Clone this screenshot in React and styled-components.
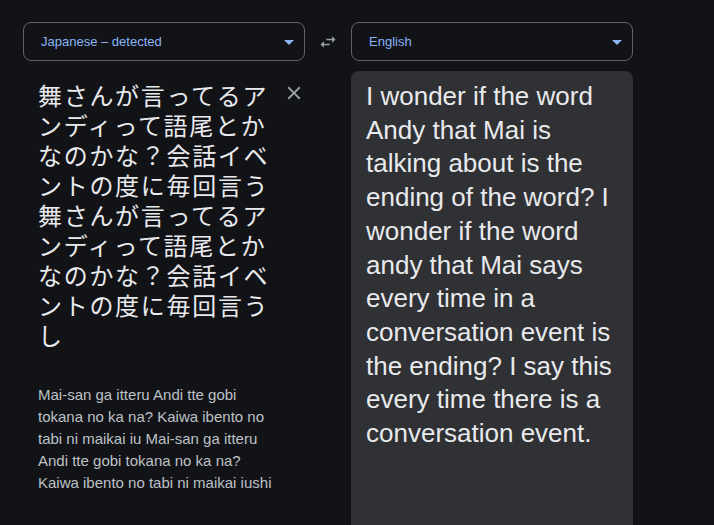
import React from 'react'
import styled, { createGlobalStyle } from 'styled-components'

const GlobalStyle = createGlobalStyle`
    html, body {
        margin: 0;
        padding: 0;
        background: #121317;
        font-family: "Liberation Sans", Arial, sans-serif;
    }
`

const Page = styled.div`
    width: 714px;
    height: 525px;
    overflow: hidden;
    box-sizing: border-box;
    padding: 22px 0 0 23px;
    background: #121317;
`

const Grid = styled.div`
    display: grid;
    grid-template-columns: 282px 46px 282px;
    grid-template-rows: 39px 1fr;
    row-gap: 10px;
    height: 100%;
`

const Select = styled.div`
    box-sizing: border-box;
    border: 1px solid #5f6368;
    border-radius: 8px;
    display: flex;
    align-items: center;
    padding: 0 10px 0 17px;
    color: #8ab4f8;
    font-size: 13px;
`

const SelectLabel = styled.span`
    flex: 1;
`

const Caret = styled.span`
    width: 0;
    height: 0;
    border-left: 5px solid transparent;
    border-right: 5px solid transparent;
    border-top: 5px solid #8ab4f8;
    margin-top: 2px;
`

const SwapButton = styled.div`
    display: flex;
    align-items: center;
    justify-content: center;
    color: #9aa0a6;
`

const SourcePanel = styled.div`
    display: flex;
    flex-direction: column;
    padding: 9px 0 0 15px;
`

const SourceTop = styled.div`
    display: flex;
    align-items: flex-start;
`

const SourceText = styled.div`
    width: 246px;
    font-family: "Noto Sans CJK JP", "Noto Sans", sans-serif;
    font-size: 24px;
    line-height: 30px;
    letter-spacing: 1.7px;
    color: #e8eaed;
`

const CloseButton = styled.div`
    margin: 2px 0 0 5px;
    color: #9aa0a6;
    display: flex;
`

const Romanization = styled.div`
    width: 242px;
    margin-top: 34px;
    font-size: 15px;
    line-height: 22px;
    color: #bdc1c6;
`

const TargetPanel = styled.div`
    grid-column: 3;
    background: #303134;
    border-radius: 8px 8px 0 0;
    padding: 9px 15px 0 15px;
    font-size: 26px;
    line-height: 33.7px;
    color: #e8eaed;
`

const App = () => {
    return (
        <Page>
            <GlobalStyle />
            <Grid>
                <Select>
                    <SelectLabel>Japanese – detected</SelectLabel>
                    <Caret />
                </Select>
                <SwapButton>
                    <svg width="20" height="20" viewBox="0 0 24 24" fill="currentColor">
                        <path d="M6.99 11L3 15l3.99 4v-3H14v-2H6.99v-3zM21 9l-3.99-4v3H10v2h7.01v3L21 9z" />
                    </svg>
                </SwapButton>
                <Select>
                    <SelectLabel>English</SelectLabel>
                    <Caret />
                </Select>

                <SourcePanel>
                    <SourceTop>
                        <SourceText>
                            舞さんが言ってるアンディって語尾とかなのかな？会話イベントの度に毎回言う舞さんが言ってるアンディって語尾とかなのかな？会話イベントの度に毎回言うし
                        </SourceText>
                        <CloseButton>
                            <svg width="22" height="22" viewBox="0 0 24 24" fill="currentColor">
                                <path d="M19 6.41L17.59 5 12 10.59 6.41 5 5 6.41 10.59 12 5 17.59 6.41 19 12 13.41 17.59 19 19 17.59 13.41 12z" />
                            </svg>
                        </CloseButton>
                    </SourceTop>
                    <Romanization>
                        Mai-san ga itteru Andi tte gobi tokana no ka na? Kaiwa ibento no tabi ni maikai iu Mai-san ga itteru Andi tte gobi tokana no ka na? Kaiwa ibento no tabi ni maikai iushi
                    </Romanization>
                </SourcePanel>
                <TargetPanel>
                    I wonder if the word Andy that Mai is talking about is the ending of the word? I wonder if the word andy that Mai says every time in a conversation event is the ending? I say this every time there is a conversation event.
                </TargetPanel>
            </Grid>
        </Page>
    )
}

export default App
